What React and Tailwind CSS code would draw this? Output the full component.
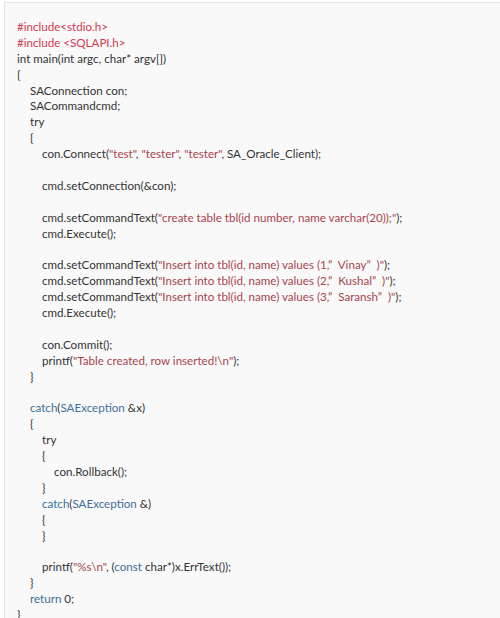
const P = "text-[#d23a4f]"
const S = "text-[#a8434e]"
const K = "text-[#3d6f9e]"

const code = [
    [0, [[P, "#include<stdio.h>"]]],
    [0, [[P, "#include <SQLAPI.h>"]]],
    [0, [["", "int main(int argc, char* argv[])"]]],
    [0, [["", "{"]]],
    [1, [["", "SAConnection con;"]]],
    [1, [["", "SACommandcmd;"]]],
    [1, [["", "try"]]],
    [1, [["", "{"]]],
    [2, [["", "con.Connect("], [S, "\"test\""], ["", ", "], [S, "\"tester\""], ["", ", "], [S, "\"tester\""], ["", ", SA_Oracle_Client);"]]],
    [2, []],
    [2, [["", "cmd.setConnection(&con);"]]],
    [2, []],
    [2, [["", "cmd.setCommandText("], [S, "\"create table tbl(id number, name varchar(20));\""], ["", ");"]]],
    [2, [["", "cmd.Execute();"]]],
    [2, []],
    [2, [["", "cmd.setCommandText("], [S, "\"Insert into tbl(id, name) values (1,\u201D  Vinay\u201D  )\""], ["", ");"]]],
    [2, [["", "cmd.setCommandText("], [S, "\"Insert into tbl(id, name) values (2,\u201D  Kushal\u201D  )\""], ["", ");"]]],
    [2, [["", "cmd.setCommandText("], [S, "\"Insert into tbl(id, name) values (3,\u201D  Saransh\u201D  )\""], ["", ");"]]],
    [2, [["", "cmd.Execute();"]]],
    [2, []],
    [2, [["", "con.Commit();"]]],
    [2, [["", "printf("], [S, "\"Table created, row inserted!\\n\""], ["", ");"]]],
    [1, [["", "}"]]],
    [1, []],
    [1, [[K, "catch"], ["", "("], [K, "SAException"], ["", " &x)"]]],
    [1, [["", "{"]]],
    [2, [["", "try"]]],
    [2, [["", "{"]]],
    [3, [["", "con.Rollback();"]]],
    [2, [["", "}"]]],
    [2, [[K, "catch"], ["", "("], [K, "SAException"], ["", " &)"]]],
    [2, [["", "{"]]],
    [2, [["", "}"]]],
    [2, []],
    [2, [["", "printf("], [S, "\"%s\\n\""], ["", ", ("], [K, "const"], ["", " char*)x.ErrText());"]]],
    [1, [["", "}"]]],
    [1, [[K, "return"], ["", " 0;"]]],
    [0, [["", "}"]]],
]

const indent = ["pl-0", "pl-[13px]", "pl-[25px]", "pl-[37px]"]

export default function App() {
    return (
        <div className="w-[500px] h-[618px] bg-white overflow-hidden">
            <div className="ml-[4px] mt-[2px] h-full border-l border-t border-[#e3e3e3] bg-[#f9f9f9] pl-[12px] pt-[16px]">
                <pre className="font-['Lato','Open_Sans',sans-serif] text-[11.6px] leading-[15.9px] text-[#333333] whitespace-pre">
                    {code.map(([lvl, segs], i) => (
                        <div key={i} className={`${indent[lvl]} h-[15.9px]`}>
                            {segs.map(([c, t], j) => (
                                <span key={j} className={c}>{t}</span>
                            ))}
                        </div>
                    ))}
                </pre>
            </div>
        </div>
    )
}
